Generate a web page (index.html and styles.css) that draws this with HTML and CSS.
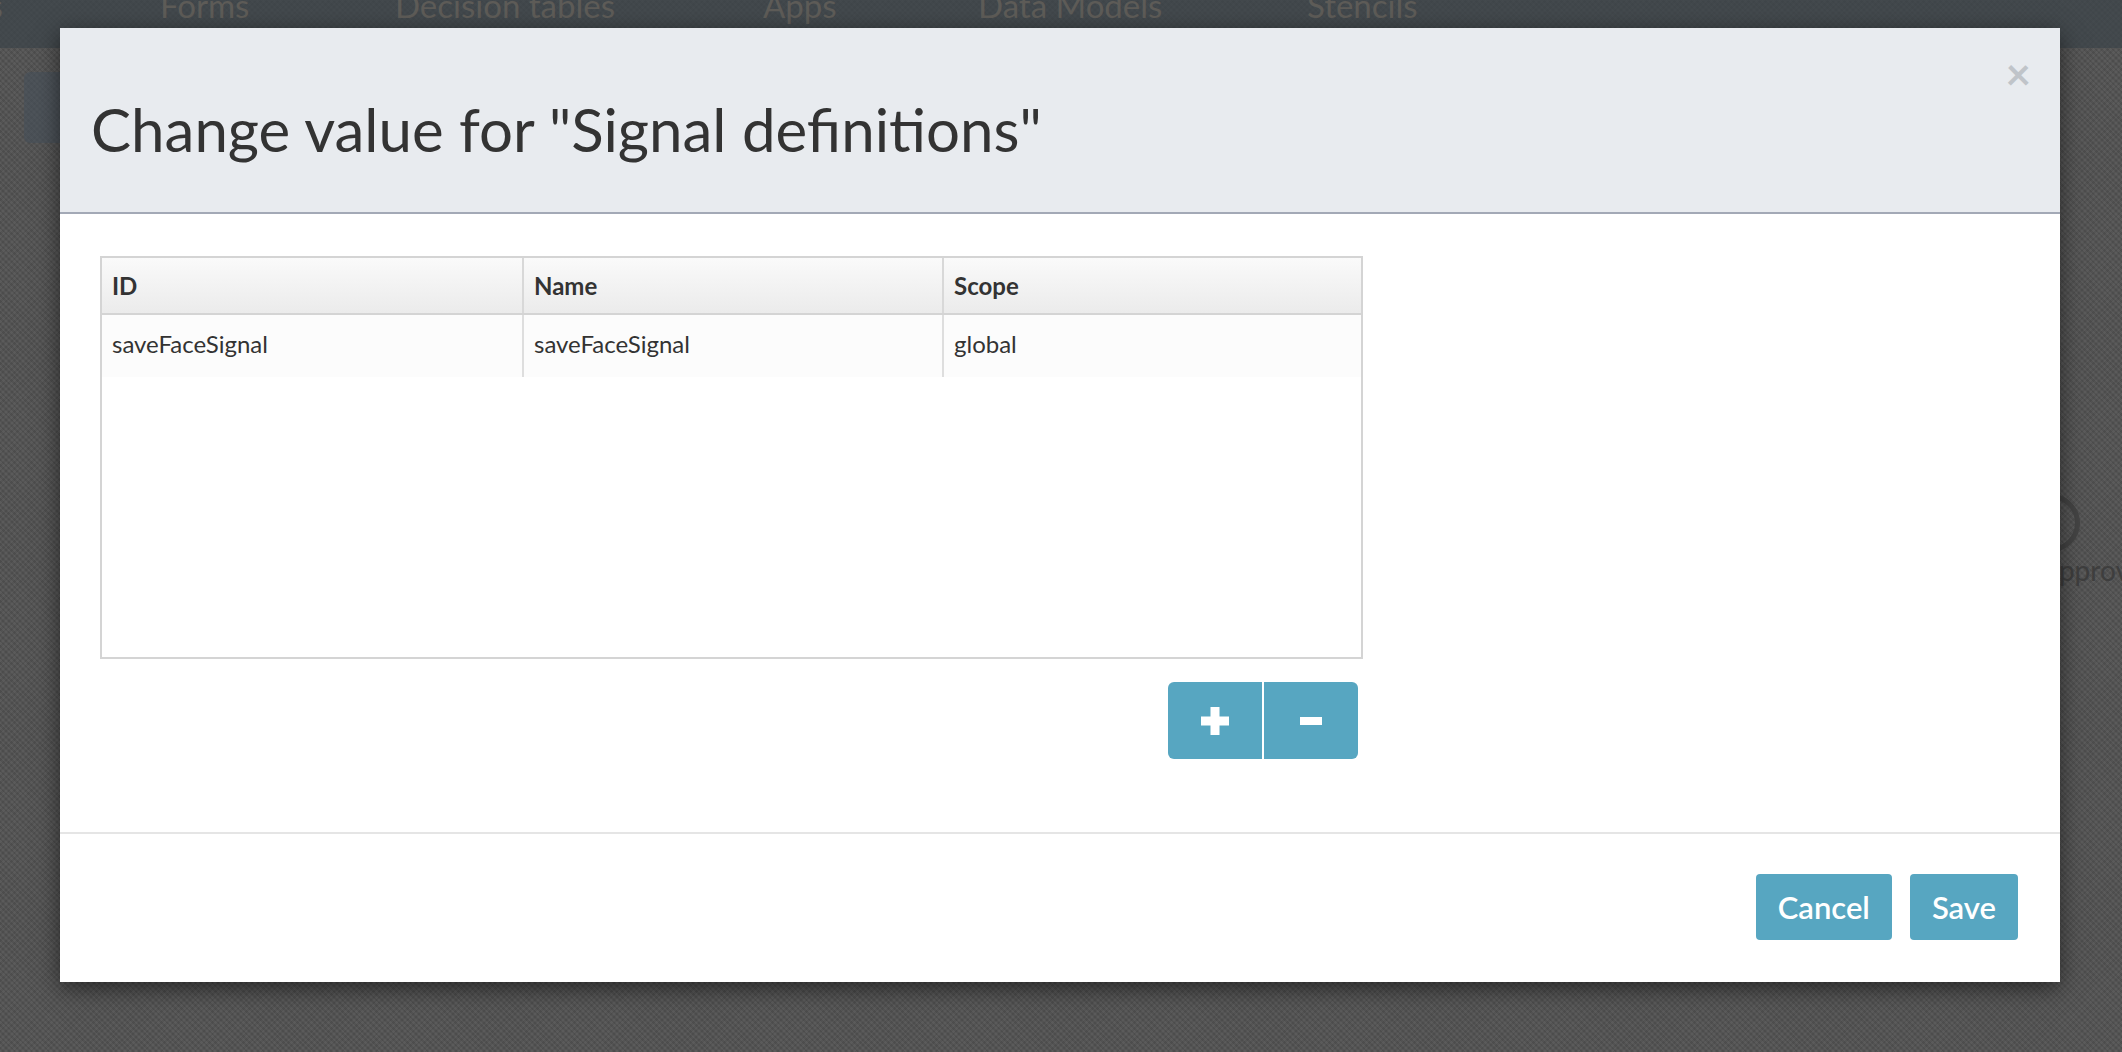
FILE: index.html
```html
<!DOCTYPE html>
<html lang="en">
<head>
<meta charset="utf-8">
<title>Change value for "Signal definitions"</title>
<link rel="stylesheet" href="styles.css">
</head>
<body>
<div class="page">
  <nav class="topnav">
    <span class="nav-item nav-first">Processes</span>
    <span class="nav-item">Forms</span>
    <span class="nav-item">Decision tables</span>
    <span class="nav-item">Apps</span>
    <span class="nav-item">Data Models</span>
    <span class="nav-item">Stencils</span>
  </nav>
  <div class="workspace">
    <div class="toolbar-box"></div>
    <div class="canvas-node">
      <div class="node-circle"></div>
      <div class="node-label">Approve</div>
    </div>
  </div>
</div>

<div class="modal">
  <div class="modal-header">
    <h1 class="modal-title">Change value for "Signal definitions"</h1>
    <button class="close" type="button">&times;</button>
  </div>
  <div class="modal-body">
    <div class="grid">
      <div class="grid-head">
        <div class="hcell">ID</div>
        <div class="hcell">Name</div>
        <div class="hcell">Scope</div>
      </div>
      <div class="grid-row">
        <div class="cell">saveFaceSignal</div>
        <div class="cell">saveFaceSignal</div>
        <div class="cell">global</div>
      </div>
    </div>
    <div class="grid-actions">
      <div class="btn-group">
        <button class="btn-icon" type="button" aria-label="Add">
          <svg width="28" height="28" viewBox="0 0 28 28"><path d="M9.5 0h9v9.5H28v9h-9.5V28h-9v-9.5H0v-9h9.5z" fill="#fff"/></svg>
        </button>
        <button class="btn-icon" type="button" aria-label="Remove">
          <svg width="22" height="8" viewBox="0 0 22 8"><rect width="22" height="8" fill="#fff"/></svg>
        </button>
      </div>
    </div>
  </div>
  <div class="modal-footer">
    <button class="btn" type="button">Cancel</button>
    <button class="btn" type="button">Save</button>
  </div>
</div>
</body>
</html>
```

FILE: styles.css
```css
html, body {
  margin: 0;
  padding: 0;
  height: 100%;
}
body {
  background-color: #525252;
  background-image:
    repeating-linear-gradient(45deg, rgba(255,255,255,0.03) 0 2px, rgba(0,0,0,0.035) 2px 4px),
    repeating-linear-gradient(-45deg, rgba(255,255,255,0.025) 0 2px, rgba(0,0,0,0.03) 2px 4px);
  font-family: Lato, "Open Sans", sans-serif;
  overflow: hidden;
}
.page {
  position: relative;
  height: 1052px;
  display: flex;
  flex-direction: column;
}
.topnav {
  height: 48px;
  background: rgba(60, 68, 74, 0.75);
  display: flex;
  align-items: flex-end;
  overflow: hidden;
}
.nav-item {
  color: #5e5c58;
  font-size: 33px;
  line-height: 1;
  margin-bottom: 26px;
}
.nav-first { width: 160px; text-indent: -140px; }
.nav-item:nth-child(2) { width: 235px; }
.nav-item:nth-child(3) { width: 368px; }
.nav-item:nth-child(4) { width: 215px; }
.nav-item:nth-child(5) { width: 329px; }
.workspace {
  flex: 1;
  display: flex;
  padding: 24px 0 0 24px;
}
.toolbar-box {
  width: 80px;
  height: 71px;
  border-radius: 6px;
  background: rgba(70, 80, 90, 0.6);
}
.canvas-node {
  position: absolute;
  left: 2022px;
  top: 494px;
  width: 120px;
}
.node-circle {
  width: 48px;
  height: 48px;
  border: 5px solid #444;
  border-radius: 50%;
}
.node-label {
  color: #3e3e3e;
  font-size: 28px;
  line-height: 1;
  margin-top: 4px;
  margin-left: 18px;
}

.modal {
  position: absolute;
  left: 60px;
  top: 28px;
  width: 2000px;
  background: #fff;
  box-shadow: 0 6px 22px rgba(0, 0, 0, 0.55);
  color: #333;
}
.modal-header {
  position: relative;
  background: #e8ebef;
  border-bottom: 2px solid #a3a9b6;
  padding: 68px 30px 50px 31px;
}
.modal-title {
  margin: 0;
  font-size: 60px;
  font-weight: 400;
  line-height: 66px;
  color: #333;
}
.close {
  position: absolute;
  top: 23px;
  right: 29px;
  border: 0;
  background: none;
  padding: 0;
  font-family: Lato, sans-serif;
  font-size: 44px;
  font-weight: 700;
  line-height: 44px;
  color: #c0c4c9;
}
.modal-body {
  padding: 42px 40px 73px;
}
.grid {
  width: 1263px;
  height: 403px;
  box-sizing: border-box;
  border: 2px solid #d4d4d4;
  background: #fff;
}
.grid-head, .grid-row {
  display: grid;
  grid-template-columns: 420px 420px 1fr;
}
.grid-head {
  height: 55px;
  border-bottom: 2px solid #d4d4d4;
  background: linear-gradient(#fafafa, #ebebeb);
}
.hcell {
  font-weight: 700;
  font-size: 24px;
  padding-left: 10px;
  line-height: 55px;
  border-left: 2px solid #d8d8d8;
}
.hcell:first-child, .cell:first-child { border-left: 0; }
.grid-row {
  height: 62px;
  background: #fcfcfc;
}
.cell {
  font-size: 24px;
  padding-left: 10px;
  padding-bottom: 4px;
  line-height: 58px;
  border-left: 2px solid #dedede;
}
.grid-actions {
  display: flex;
  justify-content: flex-end;
  width: 1258px;
  margin-top: 23px;
}
.btn-group {
  display: flex;
  gap: 2px;
}
.btn-icon {
  width: 94px;
  height: 77px;
  border: 0;
  padding: 0;
  background: #57a6c1;
  display: flex;
  align-items: center;
  justify-content: center;
}
.btn-icon:first-child { border-radius: 6px 0 0 6px; }
.btn-icon:last-child { border-radius: 0 6px 6px 0; }
.modal-footer {
  border-top: 2px solid #e5e5e5;
  padding: 40px 42px 42px;
  display: flex;
  justify-content: flex-end;
  gap: 18px;
}
.btn {
  height: 66px;
  border: 0;
  border-radius: 4px;
  background: #57a6c1;
  color: #fff;
  font-family: Lato, sans-serif;
  font-size: 31px;
  font-weight: 600;
  padding: 0 22px;
}
```
